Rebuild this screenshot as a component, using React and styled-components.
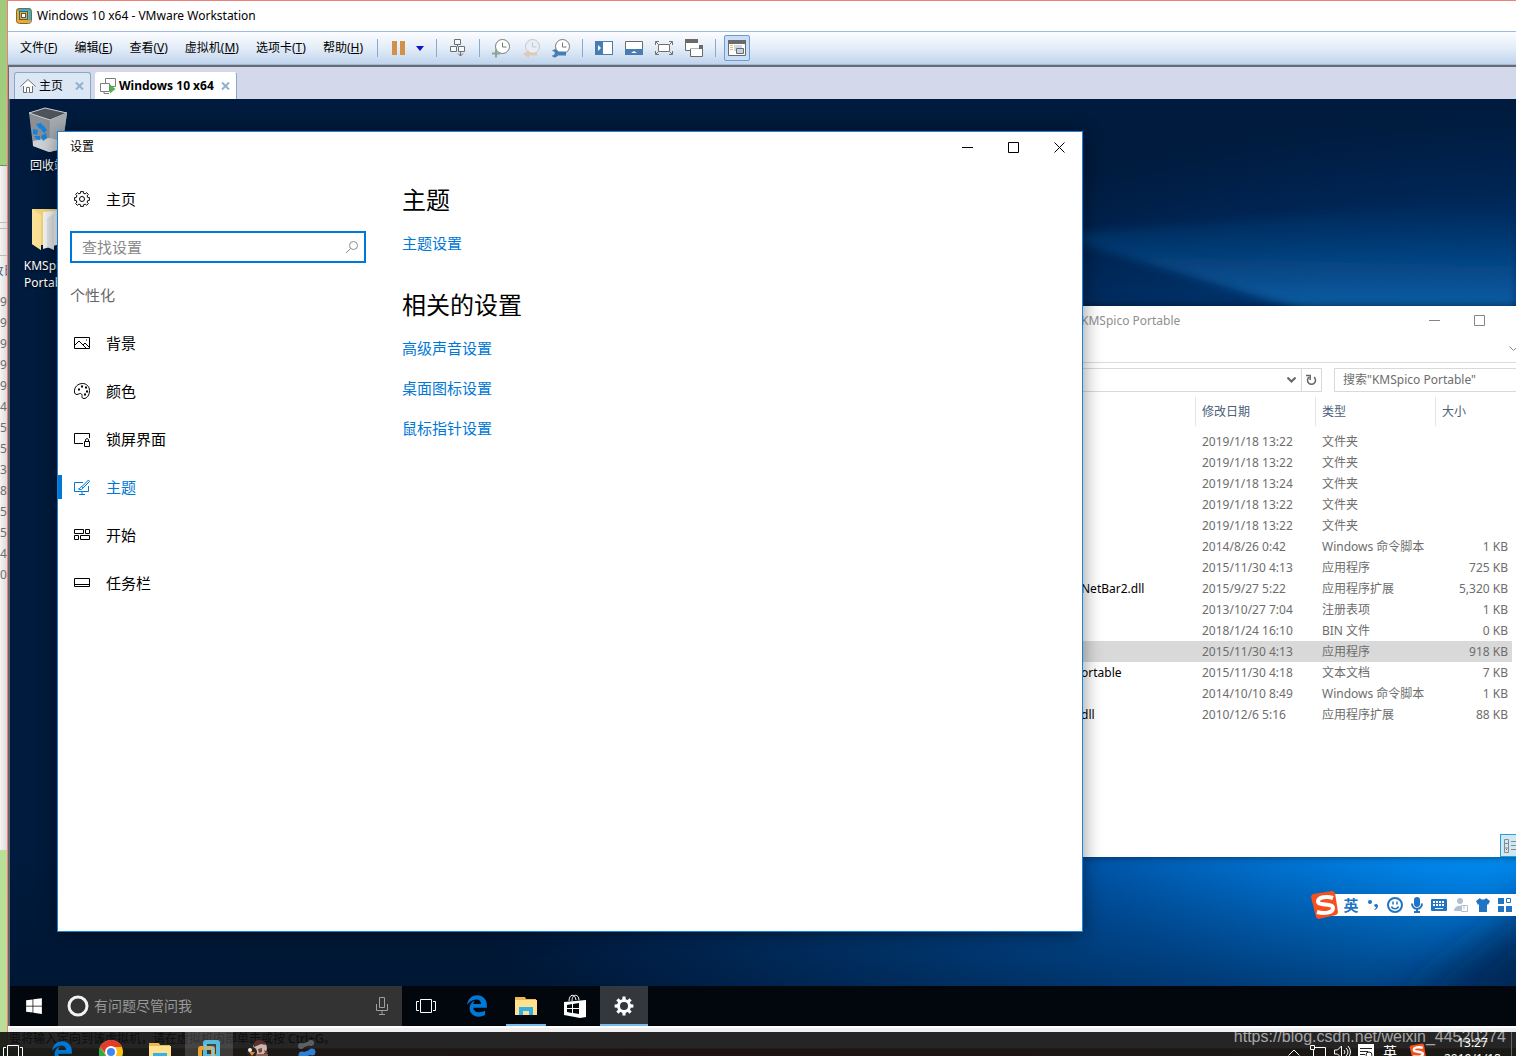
import styled, { createGlobalStyle, css } from 'styled-components';
import { FaEdgeLegacy, FaWindows } from 'react-icons/fa6';

const MENUS = [
  ['文件', 'F'],
  ['编辑', 'E'],
  ['查看', 'V'],
  ['虚拟机', 'M'],
  ['选项卡', 'T'],
  ['帮助', 'H'],
];

const NAV_ITEMS = [
  { label: '背景', icon: 'background' },
  { label: '颜色', icon: 'palette' },
  { label: '锁屏界面', icon: 'lock' },
  { label: '主题', icon: 'theme', active: true },
  { label: '开始', icon: 'start' },
  { label: '任务栏', icon: 'taskbar' },
];

const RELATED_LINKS = ['高级声音设置', '桌面图标设置', '鼠标指针设置'];

const FILES = [
  { date: '2019/1/18 13:22', type: '文件夹' },
  { date: '2019/1/18 13:22', type: '文件夹' },
  { date: '2019/1/18 13:24', type: '文件夹' },
  { date: '2019/1/18 13:22', type: '文件夹' },
  { date: '2019/1/18 13:22', type: '文件夹' },
  { date: '2014/8/26 0:42', type: 'Windows 命令脚本', size: '1 KB' },
  { date: '2015/11/30 4:13', type: '应用程序', size: '725 KB' },
  {
    name: 'NetBar2.dll',
    date: '2015/9/27 5:22',
    type: '应用程序扩展',
    size: '5,320 KB',
  },
  { date: '2013/10/27 7:04', type: '注册表项', size: '1 KB' },
  { date: '2018/1/24 16:10', type: 'BIN 文件', size: '0 KB' },
  {
    date: '2015/11/30 4:13',
    type: '应用程序',
    size: '918 KB',
    selected: true,
  },
  { name: 'ortable', date: '2015/11/30 4:18', type: '文本文档', size: '7 KB' },
  { date: '2014/10/10 8:49', type: 'Windows 命令脚本', size: '1 KB' },
  { name: 'dll', date: '2010/12/6 5:16', type: '应用程序扩展', size: '88 KB' },
];

const HOST_DIGITS = '99999455385540'.split('');

function gearPoints(center, inner, outer, teeth = 8) {
  const step = (Math.PI * 2) / teeth;
  const points = [];
  for (let i = 0; i < teeth; i++) {
    [
      [-0.3, inner],
      [-0.2, outer],
      [0.2, outer],
      [0.3, inner],
    ].forEach(([shift, radius]) => {
      const angle = (i + shift) * step;
      points.push(
        `${(center + Math.cos(angle) * radius).toFixed(2)},${(
          center +
          Math.sin(angle) * radius
        ).toFixed(2)}`
      );
    });
  }
  return points.join(' ');
}

export default function App() {
  return (
    <>
      <GlobalStyle />
      <Host>
        <HostArea>
          <HostDesktop />
          <VmWindow>
            <VmTitle>
              <VmwareIcon size={18} />
              Windows 10 x64 - VMware Workstation
            </VmTitle>
            <Toolbar />
            <VmTabs />
            <Guest>
              <Desktop>
                <Wallpaper />
                <DesktopIcons />
                <Explorer />
                <ImeBar />
                <Settings />
              </Desktop>
              <GuestTaskbar />
            </Guest>
            <StatusBar>
              要将输入定向到该虚拟机，请在虚拟机内部单击或按 Ctrl+G。
            </StatusBar>
          </VmWindow>
        </HostArea>
        <HostTaskbar />
        <Watermark>https://blog.csdn.net/weixin_44520274</Watermark>
      </Host>
    </>
  );
}

function HostDesktop() {
  return (
    <HostStrip>
      <HostGreen />
      <HostExplorer>
        <HostRibbon />
        <HostAddress />
        <HostHeader>改日</HostHeader>
        {HOST_DIGITS.map((digit, index) => (
          <HostDigit key={index}>{digit}</HostDigit>
        ))}
      </HostExplorer>
    </HostStrip>
  );
}

function Toolbar() {
  return (
    <ToolbarRow>
      <MenuList>
        {MENUS.map(([label, key]) => (
          <MenuButton key={key} type="button">
            {label}(<u>{key}</u>)
          </MenuButton>
        ))}
      </MenuList>
      <Separator />
      <ToolGroup>
        <ToolButton type="button" aria-label="挂起">
          <svg width="14" height="16">
            <path d="M0 1h5v14H0zM8 1h5v14H8z" fill="#d29148" />
          </svg>
        </ToolButton>
        <ToolButton type="button" aria-label="电源选项" $narrow>
          <svg width="8" height="5">
            <path d="M0 0h8L4 5z" fill="#0a14c8" />
          </svg>
        </ToolButton>
      </ToolGroup>
      <Separator />
      <ToolGroup>
        <ToolButton type="button" aria-label="发送 Ctrl+Alt+Del">
          <svg width="18" height="18" fill="#f6f9fd" stroke="#6f6f6f">
            <path d="M5.500.5h6v5h-6zM1.500 7.500h6v5h-6zM9.500 7.500h6v5h-6z" />
            <path d="M8.500 5.500v2M11.500 12v5M9 14.500l2.500 2.500 2.500-2.500" fill="none" />
          </svg>
        </ToolButton>
      </ToolGroup>
      <Separator />
      <ToolGroup>
        <ToolButton type="button" aria-label="拍摄快照">
          <ClockIcon>
            <path d="M0 14.500h8M4 10.500v8" stroke="#86a892" strokeWidth="2" />
          </ClockIcon>
        </ToolButton>
        <ToolButton type="button" aria-label="恢复快照" disabled>
          <ClockIcon faded>
            <path
              d="M7 11v2.500h8v3H7V19l-6-4z"
              fill="#dfc9b6"
              stroke="none"
            />
          </ClockIcon>
        </ToolButton>
        <ToolButton type="button" aria-label="管理快照">
          <ClockIcon>
            <path
              d="M0 12l2 .5 1 1.500-1 2-2 .5c1 2.500 4 2.500 6 0h8v-4H6c-1-3-4-3-6-.5z"
              fill="#477db3"
              stroke="none"
            />
          </ClockIcon>
        </ToolButton>
      </ToolGroup>
      <Separator />
      <ToolGroup>
        <ToolButton type="button" aria-label="显示库">
          <svg width="18" height="14">
            <path d="M0 0h18v14H0z" fill="#477db3" />
            <path d="M8 1h9v12H8z" fill="#fff" />
            <path d="M3 4l3 3-3 3z" fill="#fff" />
          </svg>
        </ToolButton>
        <ToolButton type="button" aria-label="显示缩略图">
          <svg width="18" height="14">
            <path d="M.5.500h17v13H.5z" fill="#fff" stroke="#6a6a6a" />
            <path d="M0 8h18v6H0z" fill="#477db3" />
            <path d="M6 12l3-2 3 2z" fill="#fff" />
          </svg>
        </ToolButton>
        <ToolButton type="button" aria-label="全屏">
          <svg width="18" height="14" fill="none" stroke="#707070">
            <path d="M3.500 3.500h11v7h-11z" fill="#fff" />
            <path d="M.5 4V.5H4M14 .5h3.500V4M.5 10v3.500H4M14 13.500h3.500V10M1 1l2 2M17 1l-2 2M1 13l2-2M17 13l-2-2" />
          </svg>
        </ToolButton>
        <ToolButton type="button" aria-label="Unity">
          <svg width="18" height="18" fill="#fff" stroke="#6a6a6a">
            <path d="M.5.500h12v11H.5z" />
            <path d="M0 0h13v4H0z" fill="#6a6a6a" stroke="none" />
            <path d="M5.500 9.500h12v8h-12z" />
            <path d="M5 8.500h8V4" stroke="#fff" strokeWidth="2" fill="none" />
            <path d="M14 6h4v4h-4z" fill="#6a6a6a" stroke="none" />
          </svg>
        </ToolButton>
      </ToolGroup>
      <Separator />
      <ConsoleButton type="button" aria-label="控制台视图">
        <svg width="18" height="16">
          <path d="M.5.500h17v15H.5z" fill="#fff" stroke="#6a6a6a" />
          <path d="M0 0h18v4H0z" fill="#6a6a6a" />
          <path d="M2 5.500h3M2 7.500h3M2 9.500h3" stroke="#e0c27c" />
          <path d="M6 5h8v6H6z" fill="#cfd9e6" />
          <path d="M8.500 8.500h7v5h-7z" fill="#c2d3e8" stroke="#6a6a6a" />
        </svg>
      </ConsoleButton>
    </ToolbarRow>
  );
}

function VmTabs() {
  return (
    <TabBar>
      <Tab>
        <TabButton type="button">
          <svg width="16" height="16" fill="#fff" stroke="#6e6e6e">
            <path d="M3.500 8v6.500h9V8M.5 8.500L8 1.500l7.500 7" />
            <path d="M6.500 14.500v-5h3v5" />
          </svg>
          主页
        </TabButton>
        <TabClose />
      </Tab>
      <Tab $active>
        <TabButton type="button" $bold>
          <svg width="16" height="16" fill="#fff" stroke="#7d7d7d">
            <path d="M5.500.5h10v8h-10z" />
            <path d="M.5 5.500h9v8h-9z" />
            <path d="M4 13.500v2h5" fill="none" />
            <path d="M10 6.500l5.500 4.500-5.500 4.500z" fill="#4db748" stroke="none" />
          </svg>
          Windows 10 x64
        </TabButton>
        <TabClose />
      </Tab>
    </TabBar>
  );
}

function TabClose() {
  return (
    <CloseTab type="button" aria-label="关闭选项卡">
      <svg width="9" height="8" stroke="#8fb1d0" strokeWidth="2">
        <path d="M1 0.500l7 7M8 0.500l-7 7" />
      </svg>
    </CloseTab>
  );
}

function DesktopIcons() {
  return (
    <IconColumn>
      <DesktopIcon>
        <svg width="40" height="46">
          <path d="M1 6L17 1l22 5-5 36-13 3-16-6z" fill="#8a8f96" />
          <path d="M1 6L17 1l22 5-17 7z" fill="#4d5358" stroke="#c9ced2" />
          <path d="M22 13l17-7-5 36-13 3z" fill="#a5aab0" />
          <path d="M5 34l16-3 14 3-1 8-13 3-16-6z" fill="#d0d3d6" />
          <g fill="#1583dc">
            <path d="M8 17l5-1 3 5-4 1-2-2z" />
            <path d="M15 18l4 5-3 3-3-3z" />
            <path d="M5 22l5 1-1 5-4-1z" />
            <path d="M6 29l6 0v4l-4-1z" />
            <path d="M13 29l5-3 1 5-4 3z" />
          </g>
        </svg>
        回收站
      </DesktopIcon>
      <DesktopIcon>
        <svg width="32" height="46">
          <path d="M0 2h30v36H9v5l-9-6z" fill="#f3d27a" />
          <path d="M11 5l17-2v34l-17 5z" fill="#f4f5f5" />
          <path d="M15 11l7-4v36l-7-3z" fill="#e1e4e5" />
          <path d="M0 2l9 6v35l-9-6z" fill="#fbe097" />
        </svg>
        <span>
          KMSpico
          <br />
          Portable
        </span>
      </DesktopIcon>
    </IconColumn>
  );
}

function Settings() {
  return (
    <SettingsWindow aria-label="设置">
      <SettingsTitle>
        <span>设置</span>
        <WindowControls color="#000" width={46} />
      </SettingsTitle>
      <SettingsBody>
        <Sidebar>
          <NavItem href="#home">
            <NavIcon name="gear" />
            主页
          </NavItem>
          <SearchBox>
            <input type="text" aria-label="查找设置" placeholder="查找设置" />
            <svg width="14" height="14" fill="none" stroke="#8a8a8a">
              <circle cx="8.500" cy="5.500" r="4" />
              <path d="M5.500 8.500L1 13" />
            </svg>
          </SearchBox>
          <SidebarLabel>个性化</SidebarLabel>
          {NAV_ITEMS.map(({ label, icon, active }) => (
            <NavItem key={label} href={`#${icon}`} $active={active}>
              <NavIcon name={icon} />
              {label}
            </NavItem>
          ))}
        </Sidebar>
        <Content>
          <section>
            <Heading>主题</Heading>
            <LinkList>
              <SettingsLink href="#theme-settings">主题设置</SettingsLink>
            </LinkList>
          </section>
          <section>
            <Heading>相关的设置</Heading>
            <LinkList>
              {RELATED_LINKS.map(label => (
                <SettingsLink key={label} href={`#${label}`}>
                  {label}
                </SettingsLink>
              ))}
            </LinkList>
          </section>
        </Content>
      </SettingsBody>
    </SettingsWindow>
  );
}

function WindowControls({ color, width }) {
  return (
    <Controls>
      <ControlButton type="button" aria-label="最小化" $width={width}>
        <svg width="11" height="11" stroke={color}>
          <path d="M0 5.500h11" />
        </svg>
      </ControlButton>
      <ControlButton type="button" aria-label="最大化" $width={width}>
        <svg width="11" height="11" stroke={color} fill="none">
          <path d="M.5.500h10v10H.5z" />
        </svg>
      </ControlButton>
      <ControlButton type="button" aria-label="关闭" $width={width}>
        <svg width="11" height="11" stroke={color}>
          <path d="M.5.500l10 10M10.500.5l-10 10" />
        </svg>
      </ControlButton>
    </Controls>
  );
}

function Explorer() {
  return (
    <ExplorerWindow aria-label="KMSpico Portable">
      <ExplorerTitle>
        <span>KMSpico Portable</span>
        <WindowControls color="#858585" width={45} />
      </ExplorerTitle>
      <Ribbon>
        <svg width="9" height="6" fill="none" stroke="#8a8a8a">
          <path d="M.5.500l4 4 4-4" />
        </svg>
      </Ribbon>
      <AddressRow>
        <AddressBox>
          <AddressButton type="button" aria-label="历史记录">
            <svg width="9" height="6" fill="none" stroke="#666" strokeWidth="2">
              <path d="M.5.500l4 4 4-4" />
            </svg>
          </AddressButton>
          <AddressButton type="button" aria-label="刷新" $divided>
            <svg
              width="11"
              height="12"
              fill="none"
              stroke="#666"
              strokeWidth="1.500"
            >
              <path d="M8 3.200a4 4 0 1 1-5 0M0 1.500h4.200V6" />
            </svg>
          </AddressButton>
        </AddressBox>
        <ExplorerSearch
          type="text"
          aria-label="搜索"
          placeholder={'搜索"KMSpico Portable"'}
        />
      </AddressRow>
      <FileTable>
        <thead>
          <tr>
            <th aria-label="名称" />
            <th>修改日期</th>
            <th>类型</th>
            <th>大小</th>
          </tr>
        </thead>
        <tbody>
          {FILES.map(({ name, date, type, size, selected }, index) => (
            <FileRow key={index} $selected={selected}>
              <td>{name}</td>
              <td>{date}</td>
              <td>{type}</td>
              <td>{size}</td>
            </FileRow>
          ))}
        </tbody>
      </FileTable>
      <ExplorerFooter>
        <ViewButton type="button" aria-label="详细信息">
          <svg width="14" height="14" fill="none" stroke="#8a8a8a">
            <path d="M.5.500h4v13h-4zM.5 4.500h4M.5 9h4M7 2.500h5M7 6.500h5M7 10.500h5" />
            <path d="M2 10.500h1" stroke="#c0392b" />
          </svg>
        </ViewButton>
      </ExplorerFooter>
    </ExplorerWindow>
  );
}

function ImeBar() {
  return (
    <Ime>
      <ImeLogo>
        <SogouIcon size={30} />
      </ImeLogo>
      <ImeItems>
        <ImeButton type="button">英</ImeButton>
        <ImeButton type="button" aria-label="标点">
          <svg width="12" height="12" fill="#1f74c4">
            <circle cx="3" cy="3" r="2" />
            <path d="M7 6c2-2 4-1 4 1s-2 4-4 4c1-1 2-2 2-3-1 0-2-1-2-2z" />
          </svg>
        </ImeButton>
        <ImeButton type="button" aria-label="表情">
          <svg width="16" height="16" fill="none" stroke="#1f74c4" strokeWidth="2">
            <circle cx="8" cy="8" r="7" />
            <path d="M6 4.500v3M10 4.500v3M4.500 9.500c1 3 6 3 7 0" strokeWidth="1.500" />
          </svg>
        </ImeButton>
        <ImeButton type="button" aria-label="语音">
          <svg width="14" height="16" fill="#1f74c4">
            <rect x="4" width="6" height="10" rx="3" />
            <path
              d="M2 6.500c0 7 10 7 10 0M7 12v3M4 15h6"
              fill="none"
              stroke="#1f74c4"
              strokeWidth="2"
            />
          </svg>
        </ImeButton>
        <ImeButton type="button" aria-label="键盘">
          <svg width="16" height="12">
            <rect width="16" height="12" rx="1" fill="#1f74c4" />
            <path
              d="M2 3h12M2 6h12"
              stroke="#fff"
              strokeWidth="2"
              strokeDasharray="2 1"
            />
            <path d="M4 9.500h8" stroke="#fff" />
          </svg>
        </ImeButton>
        <ImeButton type="button" aria-label="帐户">
          <svg width="16" height="16" fill="#b4bfd3">
            <circle cx="7" cy="4" r="3" />
            <path d="M1 14c0-7 12-7 12 0z" />
            <path d="M8.500 8.500h6v6h-6z" fill="#fff" stroke="#b4bfd3" />
            <path d="M11 8v4" stroke="#b4bfd3" />
          </svg>
        </ImeButton>
        <ImeButton type="button" aria-label="皮肤">
          <svg width="14" height="14" fill="#1f74c4">
            <path d="M4 0c1 2 5 2 6 0l4 3-2 4-1-1v8H3V6L2 7 0 3z" />
          </svg>
        </ImeButton>
        <ImeButton type="button" aria-label="工具箱">
          <svg width="14" height="14" fill="#1f74c4">
            <path d="M0 0h6v6H0zM0 8h6v6H0zM8 8h6v6H8z" />
            <path d="M8.500.5h4v4h-4z" fill="#fff" stroke="#1f74c4" />
          </svg>
        </ImeButton>
      </ImeItems>
    </Ime>
  );
}

function GuestTaskbar() {
  return (
    <GuestBar>
      <StartButton type="button" aria-label="开始">
        <FaWindows size={18} />
      </StartButton>
      <Cortana>
        <svg width="22" height="22" fill="none" stroke="#f2f2f2">
          <circle cx="11" cy="11" r="9" strokeWidth="3" />
        </svg>
        <input type="text" aria-label="搜索" placeholder="有问题尽管问我" />
        <svg width="12" height="18" fill="none" stroke="#a0a0a0">
          <path d="M3.500.5h5v10h-5zM.5 7v6.500h11V7M6 13.500V17M3 17.500h6" />
        </svg>
      </Cortana>
      <TaskButton type="button" aria-label="任务视图">
        <TaskViewIcon />
      </TaskButton>
      <PinnedApps>
        <TaskButton type="button" aria-label="Microsoft Edge">
          <FaEdgeLegacy size={22} color="#0078d7" />
        </TaskButton>
        <TaskButton type="button" aria-label="文件资源管理器" $open>
          <FolderIcon />
        </TaskButton>
        <TaskButton type="button" aria-label="应用商店">
          <svg width="22" height="24">
            <path d="M5 7C5 0 11-1 12 6M8 7c0-8 7-7 7-1" fill="none" stroke="#fff" />
            <path d="M0 8l22-2v17l-6 1-16-3z" fill="#fff" />
            <path
              d="M3 11l5-1v4H3zM9 10l6-1v5H9zM3 15h5v4l-5-1zM9 15h6v5l-6-1z"
              fill="#02060d"
            />
          </svg>
        </TaskButton>
        <TaskButton type="button" aria-label="设置" $active>
          <svg width="20" height="20" fill="#fff">
            <polygon points={gearPoints(10, 7, 9.500)} />
            <circle cx="10" cy="10" r="4" fill="#34373b" />
          </svg>
        </TaskButton>
      </PinnedApps>
    </GuestBar>
  );
}

function HostTaskbar() {
  return (
    <HostBar>
      <HostApps>
        <HostApp type="button" aria-label="任务视图" $narrow>
          <TaskViewIcon />
        </HostApp>
        <HostApp type="button" aria-label="Microsoft Edge">
          <FaEdgeLegacy size={22} color="#0078d7" />
        </HostApp>
        <HostApp type="button" aria-label="Chrome">
          <svg width="24" height="24">
            <circle cx="12" cy="12" r="12" fill="#fbc116" />
            <path d="M1 7C6-3 19-2 23 7H12l-5 7z" fill="#e33b2e" />
            <path d="M1 7l6 9 4 8C1 23-2 14 1 7z" fill="#2da94f" />
            <circle cx="12" cy="12" r="6" fill="#fff" />
            <circle cx="12" cy="12" r="4" fill="#4285f4" />
          </svg>
        </HostApp>
        <HostApp type="button" aria-label="文件资源管理器">
          <FolderIcon />
        </HostApp>
        <HostApp type="button" aria-label="VMware Workstation" $active>
          <svg width="22" height="24" fill="none">
            <rect x="7" y="2" width="13" height="14" rx="1" stroke="#57b9dc" strokeWidth="4" />
            <rect x="2" y="8" width="13" height="14" rx="1" stroke="#efa32b" strokeWidth="4" />
            <path d="M7 5v3h8v8" stroke="#7cc8e2" strokeWidth="2" />
          </svg>
        </HostApp>
        <HostApp type="button" aria-label="游戏">
          <svg width="24" height="24">
            <circle cx="14" cy="8" r="7" fill="#c9b8ae" />
            <path d="M8 3c3-5 10-3 12 2l-5-1-7 3z" fill="#5b2f2c" />
            <path d="M12 9l4-1v4l-3 1zM18 10l4 2-2 4z" fill="#7a433c" />
            <circle cx="6" cy="12" r="5" fill="#2b2423" />
            <circle cx="4" cy="10" r="2" fill="#eee" />
            <path d="M3 12h6l-3 4z" fill="#e8842c" />
            <path d="M10 14h12v8H8z" fill="#8b5c50" />
          </svg>
        </HostApp>
        <HostApp type="button" aria-label="工具">
          <svg width="20" height="24" fill="none" strokeLinecap="round">
            <path d="M5 6l8-3" stroke="#5d6165" strokeWidth="4" />
            <circle cx="4" cy="6" r="2" stroke="#5d6165" strokeWidth="2" />
            <circle cx="14" cy="3" r="2" stroke="#5d6165" strokeWidth="2" />
            <path d="M6 15l8-3" stroke="#2d7fd6" strokeWidth="5" />
            <circle cx="5" cy="15" r="2" stroke="#2d7fd6" strokeWidth="3" />
            <circle cx="15" cy="12" r="2" stroke="#2d7fd6" strokeWidth="3" />
          </svg>
        </HostApp>
      </HostApps>
      <Tray>
        <TrayButton type="button" aria-label="显示隐藏的图标">
          <svg width="12" height="7" fill="none" stroke="#fff">
            <path d="M.5 6.500L6 1l5.500 5.500" />
          </svg>
        </TrayButton>
        <TrayButton type="button" aria-label="网络">
          <svg width="16" height="14" fill="none" stroke="#fff">
            <path d="M.5.500h4v4h-4zM5 2.500h10.500v9H3.500V5M6 13.500h7" />
          </svg>
        </TrayButton>
        <TrayButton type="button" aria-label="音量">
          <svg width="17" height="14" fill="none" stroke="#fff">
            <path d="M.5 5v4h3l4 4V1l-4 4zM10 5q2 2 0 4M12 3q4 4 0 8M14 1q5 6 0 12" />
          </svg>
        </TrayButton>
        <TrayButton type="button" aria-label="操作中心">
          <svg width="16" height="16">
            <path d="M0 0h16v16H0z" fill="#fff" />
            <path d="M2 4.500h12M2 7.500h8M2 10.500h5" stroke="#222" />
            <circle cx="11" cy="11" r="3" fill="none" stroke="#222" />
          </svg>
        </TrayButton>
        <TrayButton type="button">英</TrayButton>
        <TrayButton type="button" aria-label="搜狗输入法" $wide>
          <SogouIcon size={18} />
        </TrayButton>
        <Clock>
          <time>13:27</time>
          <time>2019/1/18</time>
        </Clock>
        <ShowDesktop type="button" aria-label="显示桌面" />
      </Tray>
    </HostBar>
  );
}

function Wallpaper() {
  return (
    <WallpaperSvg viewBox="0 0 1506 887" preserveAspectRatio="none">
      <defs>
        <radialGradient
          id="glow"
          gradientUnits="userSpaceOnUse"
          cx="0"
          cy="0"
          r="1"
          gradientTransform="translate(1560 670) scale(1120 660)"
        >
          <stop offset="0" stopColor="#00a0ff" />
          <stop offset="0.200" stopColor="#0089f2" />
          <stop offset="0.450" stopColor="#0057ac" />
          <stop offset="0.700" stopColor="#003a78" />
          <stop offset="0.900" stopColor="#002350" />
          <stop offset="1" stopColor="#001b3d" />
        </radialGradient>
        <linearGradient id="floor" x1="0" y1="0" x2="0" y2="1">
          <stop offset="0" stopColor="#001127" stopOpacity="0" />
          <stop offset="1" stopColor="#001127" stopOpacity="0.400" />
        </linearGradient>
        <linearGradient id="beam" x1="0.500" y1="1" x2="0.600" y2="0">
          <stop offset="0" stopColor="#2196ea" stopOpacity="0.450" />
          <stop offset="1" stopColor="#0a6cc4" stopOpacity="0" />
        </linearGradient>
        <filter id="soft">
          <feGaussianBlur stdDeviation="4" />
        </filter>
        <filter id="softer" x="-50%" y="-50%" width="200%" height="200%">
          <feGaussianBlur stdDeviation="24" />
        </filter>
      </defs>
      <rect width="1506" height="887" fill="url(#glow)" />
      <rect width="1506" height="137" y="750" fill="url(#floor)" />
      <path
        d="M1040 136L1300 213H1506V100z"
        fill="url(#beam)"
        filter="url(#soft)"
      />
      <path
        d="M1560 780L1380 920H1560z"
        fill="#001f47"
        opacity="0.800"
        filter="url(#softer)"
      />
    </WallpaperSvg>
  );
}

function NavIcon({ name }) {
  return (
    <svg width="16" height="16" fill="none" stroke="currentColor">
      {name === 'gear' && (
        <>
          <polygon points={gearPoints(8, 6, 7.800)} />
          <circle cx="8" cy="8" r="2.500" />
        </>
      )}
      {name === 'background' && (
        <>
          <path d="M.5 2.500h15v11H.5z" />
          <path d="M1 10l4-4 7 7M9 10l2-2 4 4M12 5h1" />
        </>
      )}
      {name === 'palette' && (
        <>
          <path d="M.5 9C0 4 4 .5 8.500.5c4 0 7 3 7 7 0 4.500-2.500 8-5.500 8-3.500 0-1-3-2.500-4.500S4.500 11.500 3 11.500C1.500 11.500.6 10.500.5 9z" />
          <path
            d="M4 6.500h2M7 3.500h2M11 4.500h2M12 8.500h2M10 11.500h2"
            strokeWidth="2"
          />
        </>
      )}
      {name === 'lock' && (
        <>
          <path d="M9 12.500H.5v-10h15V7" />
          <path d="M10.500 10.500h5v5h-5zM11.500 10V8.500q1.500-2 3 0V10" />
        </>
      )}
      {name === 'theme' && (
        <>
          <path d="M9 3.500H.5v9h14V7M5 15.500h6M8 13v2" />
          <path d="M14.500 1L8 7.500l1 1.500L15.500 2.500zM8 7.500c-2 0-1 2-3.500 2.500 2 1 4 .5 4.500-1" />
        </>
      )}
      {name === 'start' && (
        <path d="M.5 2.500h9v4h-9zM11.500 2.500h4v4h-4zM.5 8.500h4v4h-4zM6.500 8.500h9v4h-9z" />
      )}
      {name === 'taskbar' && <path d="M.5 3.500h15v8H.5zM.5 9.500h15" />}
    </svg>
  );
}

function ClockIcon({ faded, children }) {
  return (
    <svg width="18" height="19" fill="none" stroke={faded ? '#c3c7cd' : '#777'}>
      <circle
        cx="10.500"
        cy="7.500"
        r="7"
        fill={faded ? '#e9eef6' : '#fff'}
      />
      <path d="M10.500 3.500v4.500h4" />
      {children}
    </svg>
  );
}

function VmwareIcon({ size }) {
  return (
    <svg width={size} height={size} viewBox="0 0 18 18" fill="none">
      <rect x="1" y="1" width="15" height="15" rx="3" fill="#efa92f" />
      <path d="M4 1h10q2.500 0 2.500 3v9l-3 1V4H3z" fill="#3badd0" />
      <rect x="1.500" y="1.500" width="15" height="15" rx="3" stroke="#7a6a3a" />
      <rect x="4.500" y="4.500" width="8" height="8" fill="#efa92f" stroke="#40606c" />
      <rect x="6.500" y="6.500" width="4" height="4" fill="#fff" stroke="#4b5a60" />
    </svg>
  );
}

function SogouIcon({ size }) {
  return (
    <svg width={size} height={size} viewBox="0 0 30 30">
      <path d="M1 7q0-2 2-3l19-3q2 0 3 2l3 19q0 2-2 3L9 29q-2 0-3-2z" fill="#f4511e" />
      <path
        d="M23 8C17 6 8 7 8 11.500S23 13 23 18s-9 6-16 4"
        fill="none"
        stroke="#fff"
        strokeWidth="4"
      />
    </svg>
  );
}

function TaskViewIcon() {
  return (
    <svg width="20" height="16" fill="none" stroke="#fff">
      <path d="M4.500 1.500h11v13h-11zM3 3.500H.5v9H3M17 3.500h2.500v9H17" />
    </svg>
  );
}

function FolderIcon() {
  return (
    <svg width="22" height="20">
      <path d="M0 1h10l1 2h10v15H0z" fill="#ecba4c" />
      <path d="M0 4h22v15H0z" fill="#ffe28f" />
      <path d="M4 11h14v8h-4v-4H8v4H4z" fill="#35b0e6" />
    </svg>
  );
}

const GlobalStyle = createGlobalStyle`
  * {
    box-sizing: border-box;
  }

  body {
    margin: 0;
    overflow: hidden;
    font-family: "Noto Sans", "Noto Sans CJK SC", sans-serif;
    font-size: 12px;
    line-height: 16px;
    color: #000;
  }

  button, input {
    margin: 0;
    padding: 0;
    border: 0;
    background: none;
    font: inherit;
    color: inherit;
  }

  input {
    min-width: 0;
    outline: 0;
  }

  svg {
    flex-shrink: 0;
  }
`;

const Host = styled.div`
  position: relative;
  display: flex;
  flex-direction: column;
  height: 100vh;
  padding-bottom: 7px;
  overflow: hidden;
  background: linear-gradient(90deg, #7fa068, #a33 45%, #a44 55%, #7a8a60);
`;

const HostArea = styled.div`
  display: flex;
  flex: 1;
  min-height: 0;
`;

const HostStrip = styled.aside`
  display: flex;
  flex-direction: column;
  width: 7px;
  overflow: hidden;
  background: #b9de98;
`;

const HostGreen = styled.div`
  height: 166px;
  background: linear-gradient(#9fca7c, #a3cf80);
  border-bottom: 1px solid #6f8f5a;
`;

const HostExplorer = styled.div`
  height: 684px;
  background: linear-gradient(90deg, #f4f4f4, #dcdcdc);
  color: #6d6d6d;
`;

const HostRibbon = styled.div`
  height: 57px;
  border-bottom: 1px solid #bbb;
`;

const HostAddress = styled.div`
  height: 28px;
  margin-top: 5px;
  border: solid #bbb;
  border-width: 1px 0;
`;

const HostHeader = styled.div`
  display: flex;
  justify-content: center;
  padding: 7px 0 12px;
  white-space: nowrap;
  color: #4c607a;
`;

const HostDigit = styled.div`
  line-height: 21px;
`;

const VmWindow = styled.main`
  display: flex;
  flex: 1;
  flex-direction: column;
  min-width: 0;
  border: solid #ee8078;
  border-width: 1px 0 1px 1px;
  background: #fff;
`;

const VmTitle = styled.header`
  display: flex;
  align-items: center;
  gap: 4px;
  height: 30px;
  padding-left: 7px;
`;

const ToolbarRow = styled.div`
  display: flex;
  align-items: center;
  height: 34px;
  padding-left: 12px;
  border: solid #9dbbe0;
  border-width: 1px 0;
  background: linear-gradient(#fbfcfe, #e3edf8 50%, #c0d4ec);
`;

const MenuList = styled.nav`
  display: flex;
  gap: 17px;
  margin-right: 14px;
`;

const MenuButton = styled.button`
  white-space: nowrap;
`;

const Separator = styled.span`
  width: 1px;
  height: 18px;
  background: #86a8d2;
`;

const ToolGroup = styled.div`
  display: flex;
  padding: 0 6px;
`;

const ToolButton = styled.button`
  display: flex;
  align-items: center;
  justify-content: center;
  width: ${({ $narrow }) => ($narrow ? 16 : 30)}px;
  height: 24px;
  padding-right: ${({ $narrow }) => ($narrow ? 4 : 0)}px;
`;

const ConsoleButton = styled(ToolButton)`
  width: 26px;
  height: 26px;
  margin-left: 8px;
  border: 1px solid #6f9bd1;
  border-radius: 2px;
  background: #c9def7;
`;

const TabBar = styled.div`
  display: flex;
  align-items: flex-end;
  gap: 4px;
  height: 34px;
  padding-left: 5px;
  border-top: 2px solid #6b6b6b;
  border-left: 1px solid #6b6b6b;
  background: #d4d8eb;
`;

const Tab = styled.div`
  display: flex;
  align-items: center;
  gap: 12px;
  height: 27px;
  padding: 0 6px 0 5px;
  border: solid #86a9ca;
  border-width: 1px 1px 0 1px;
  border-radius: 3px 3px 0 0;
  background: #dce7f5;

  ${({ $active }) =>
    $active &&
    css`
      gap: 7px;
      padding-left: 4px;
      border-left-color: #fff;
      border-top-color: #fff;
      background: #fff;
    `}
`;

const TabButton = styled.button`
  display: flex;
  align-items: center;
  gap: 3px;
  font-weight: ${({ $bold }) => ($bold ? 700 : 400)};
  white-space: nowrap;
`;

const CloseTab = styled.button`
  display: flex;
`;

const Guest = styled.div`
  display: flex;
  flex: 1;
  flex-direction: column;
  min-height: 0;
  border-left: 2px solid #62666c;
`;

const Desktop = styled.div`
  position: relative;
  flex: 1;
  overflow: hidden;
  background: #001b3d;
`;

const WallpaperSvg = styled.svg`
  position: absolute;
  width: 100%;
  height: 100%;
`;

const IconColumn = styled.div`
  position: relative;
  display: grid;
  grid-auto-rows: 100px;
  width: 76px;
  padding-top: 8px;
`;

const DesktopIcon = styled.div`
  display: flex;
  flex-direction: column;
  align-items: center;
  gap: 4px;
  color: #fff;
  line-height: 17px;
  text-align: center;
  text-shadow: 0 1px 2px #000;
`;

const SettingsWindow = styled.section`
  position: absolute;
  top: 32px;
  left: 47px;
  display: flex;
  flex-direction: column;
  width: 1026px;
  height: 801px;
  border: 1px solid #1883d7;
  background: #fff;
  box-shadow: 0 2px 18px rgba(0, 0, 0, 0.45);
`;

const SettingsTitle = styled.header`
  display: flex;
  align-items: center;
  justify-content: space-between;
  height: 30px;
  padding-left: 12px;
`;

const Controls = styled.div`
  display: flex;
`;

const ControlButton = styled.button`
  display: flex;
  align-items: center;
  justify-content: center;
  width: ${({ $width }) => $width}px;
  height: 29px;
`;

const SettingsBody = styled.div`
  display: grid;
  grid-template-columns: 320px 1fr;
  flex: 1;
  font-size: 15px;
  line-height: 20px;
`;

const Sidebar = styled.nav`
  padding-top: 13px;
`;

const NavItem = styled.a`
  display: flex;
  align-items: center;
  gap: 16px;
  height: 48px;
  padding-left: 16px;
  color: #000;
  text-decoration: none;

  ${({ $active }) =>
    $active &&
    css`
      padding-left: 12px;
      color: #0078d7;

      &::before {
        content: '';
        width: 4px;
        height: 24px;
        margin-left: -12px;
        margin-right: -4px;
        background: #0078d7;
      }
    `}
`;

const SearchBox = styled.div`
  display: flex;
  align-items: center;
  height: 32px;
  margin: 8px 12px;
  padding: 0 5px 0 10px;
  border: 2px solid #0078d7;

  input {
    flex: 1;
  }

  input::placeholder {
    color: #8a8a8a;
    opacity: 1;
  }
`;

const SidebarLabel = styled.div`
  padding: 14px 12px;
  color: #666;
`;

const Content = styled.div`
  display: flex;
  flex-direction: column;
  gap: 36px;
  padding: 22px 24px;
`;

const Heading = styled.h2`
  margin: 0 0 17px;
  font-size: 24px;
  font-weight: 400;
  line-height: 32px;
`;

const LinkList = styled.div`
  display: grid;
  justify-items: start;
  gap: 20px;
`;

const SettingsLink = styled.a`
  color: #0078d7;
  text-decoration: none;
`;

const ExplorerWindow = styled.section`
  position: absolute;
  top: 207px;
  right: -31px;
  bottom: 129px;
  left: 1071px;
  display: flex;
  flex-direction: column;
  background: #fff;
  box-shadow: 0 0 8px rgba(0, 0, 0, 0.5);
`;

const ExplorerTitle = styled.header`
  display: flex;
  align-items: center;
  justify-content: space-between;
  height: 29px;
  color: #8f8f8f;
`;

const Ribbon = styled.div`
  display: flex;
  align-items: center;
  justify-content: flex-end;
  height: 28px;
  padding-right: 29px;
  border-bottom: 1px solid #dadbdc;
`;

const AddressRow = styled.div`
  display: flex;
  gap: 12px;
  height: 34px;
  padding: 5px 12px 5px 0;
`;

const AddressBox = styled.div`
  display: flex;
  flex: 1;
  justify-content: flex-end;
  border: 1px solid #d9d9d9;
`;

const AddressButton = styled.button`
  display: flex;
  align-items: center;
  justify-content: center;
  width: 20px;
  border-left: ${({ $divided }) => ($divided ? '1px solid #d9d9d9' : 'none')};
`;

const ExplorerSearch = styled.input`
  width: 201px;
  padding: 0 8px;
  border: 1px solid #d9d9d9;

  &::placeholder {
    color: #6d6d6d;
    opacity: 1;
  }
`;

const FileTable = styled.table`
  width: calc(100% - 30px);
  table-layout: fixed;
  border-collapse: separate;
  border-spacing: 0;
  color: #6d6d6d;
  white-space: nowrap;

  th {
    width: 120px;
    height: 29px;
    padding: 0 6px;
    border-right: 1px solid #e5e5e5;
    color: #4c607a;
    font-weight: 400;
    text-align: left;
  }

  th:first-child {
    width: auto;
  }

  th:last-child {
    width: 81px;
  }

  thead::after {
    content: '';
    display: block;
    height: 5px;
  }
`;

const FileRow = styled.tr`
  td {
    height: 21px;
    padding: 0 6px;
    background: ${({ $selected }) => ($selected ? '#d9d9d9' : '#fff')};
  }

  td:first-child {
    padding-left: 0;
    color: #000;
  }

  td:last-child {
    padding-right: 4px;
    border-right: 5px solid #fff;
    text-align: right;
  }
`;

const ExplorerFooter = styled.footer`
  display: flex;
  justify-content: flex-end;
  height: 23px;
  margin-top: auto;
  padding-right: 25px;
`;

const ViewButton = styled.button`
  display: flex;
  align-items: center;
  width: 22px;
  padding-left: 3px;
  border: 1px solid #26a0da;
  background: #cfe8f6;
`;

const Ime = styled.div`
  position: absolute;
  right: 0;
  bottom: 66px;
  display: flex;
  align-items: center;
`;

const ImeLogo = styled.span`
  z-index: 1;
  display: flex;
  margin-right: -14px;
`;

const ImeItems = styled.div`
  display: flex;
  height: 22px;
  padding-left: 14px;
  background: #fff;
`;

const ImeButton = styled.button`
  display: flex;
  align-items: center;
  justify-content: center;
  width: 22px;
  color: #1f74c4;
  font-size: 15px;
  font-weight: 700;
`;

const GuestBar = styled.footer`
  display: flex;
  height: 40px;
  background: #02060d;
  color: #fff;
`;

const StartButton = styled.button`
  display: flex;
  align-items: center;
  justify-content: center;
  width: 48px;
`;

const Cortana = styled.div`
  display: flex;
  align-items: center;
  gap: 5px;
  width: 344px;
  padding: 0 14px 0 9px;
  background: #333;
  font-size: 14px;

  input {
    flex: 1;
  }

  input::placeholder {
    color: #999;
    opacity: 1;
  }
`;

const TaskButton = styled.button`
  display: flex;
  align-items: center;
  justify-content: center;
  width: 48px;

  ${({ $open }) =>
    $open &&
    css`
      background: linear-gradient(#76b9ed, #76b9ed) center bottom / 40px 2px
        no-repeat;
    `}

  ${({ $active }) =>
    $active &&
    css`
      background: linear-gradient(#76b9ed, #76b9ed) center bottom / 48px 2px
        no-repeat #34373b;
    `}
`;

const PinnedApps = styled.div`
  display: flex;
  gap: 1px;
  margin-left: 3px;
`;

const StatusBar = styled.footer`
  height: 22px;
  padding-left: 1px;
  border-top: 2px solid #fff;
  background: #f0f0f0;
  line-height: 22px;
  white-space: nowrap;
`;

const HostBar = styled.footer`
  position: absolute;
  right: 0;
  bottom: -16px;
  left: 0;
  display: flex;
  justify-content: space-between;
  height: 40px;
  background: rgba(14, 14, 14, 0.9);
  color: #fff;
`;

const HostApps = styled.div`
  display: flex;
  gap: 1px;
`;

const HostApp = styled.button`
  display: flex;
  align-items: center;
  justify-content: center;
  width: ${({ $narrow }) => ($narrow ? 37 : 48)}px;
  padding-right: ${({ $narrow }) => ($narrow ? 12 : 0)}px;
  background: ${({ $active }) =>
    $active ? 'rgba(255, 255, 255, 0.15)' : 'none'};
`;

const Tray = styled.div`
  display: flex;
`;

const TrayButton = styled.button`
  display: flex;
  align-items: center;
  justify-content: center;
  width: ${({ $wide }) => ($wide ? 32 : 24)}px;
  font-size: 14px;
`;

const Clock = styled.div`
  display: flex;
  flex-direction: column;
  align-items: center;
  width: 77px;
  padding-top: 3px;
`;

const ShowDesktop = styled.button`
  width: 5px;
  border-left: 1px solid #666;
`;

const Watermark = styled.div`
  position: absolute;
  right: 10px;
  bottom: 9px;
  color: rgba(255, 255, 255, 0.6);
  font-family: 'Liberation Sans', sans-serif;
  font-size: 16px;
  line-height: 20px;
`;
